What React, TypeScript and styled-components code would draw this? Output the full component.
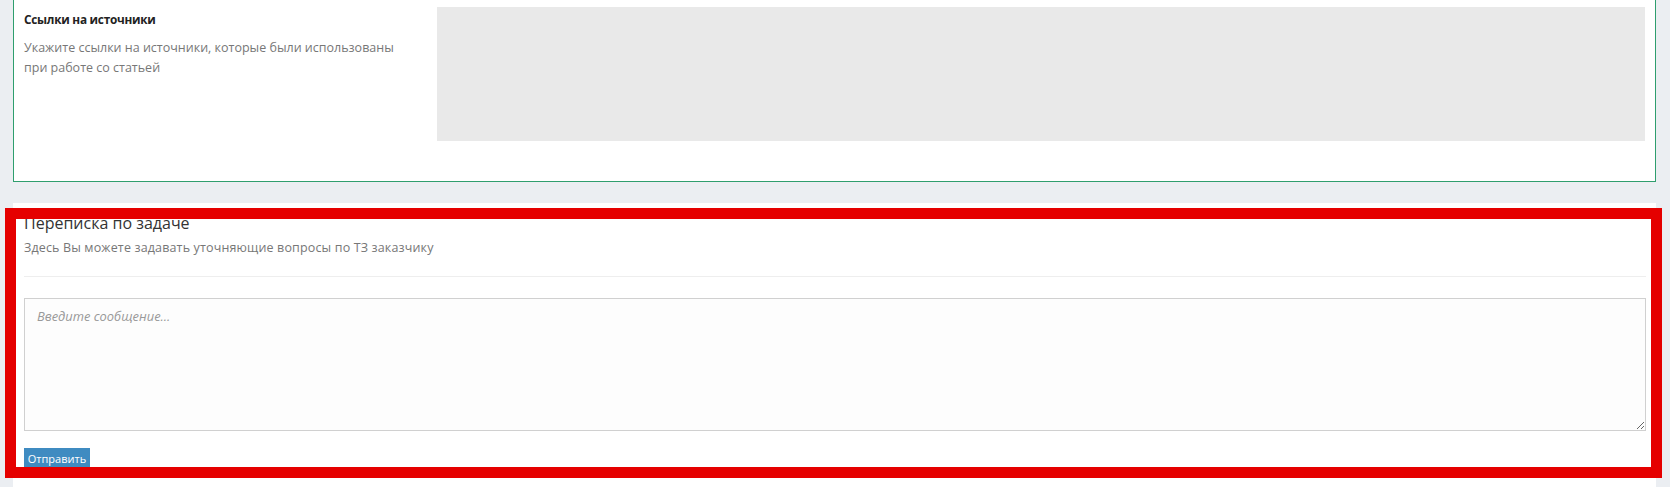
import styled, { createGlobalStyle } from 'styled-components';

const GlobalStyle = createGlobalStyle`
  html, body {
    margin: 0;
    padding: 0;
    background: #ebeef2;
    font-family: "Open Sans", "Liberation Sans", sans-serif;
  }
  * { box-sizing: border-box; }
`;

const Page = styled.div`
  position: relative;
  padding: 0 14px 0 13px;
  height: 487px;
  overflow: hidden;
`;

const SourcesCard = styled.section`
  background: #fff;
  border: 1px solid #2f9e6e;
  border-top: none;
  padding: 7px 10px 40px 0;
  display: flex;
`;

const FieldInfo = styled.div`
  width: 423px;
  padding: 3px 20px 0 10px;
`;

const FieldTitle = styled.div`
  font-size: 11.8px;
  font-weight: 700;
  letter-spacing: -0.25px;
  color: #222;
  line-height: 18px;
`;

const FieldHint = styled.div`
  margin-top: 10px;
  font-size: 12.5px;
  line-height: 20px;
  color: #777;
`;

const SourcesBox = styled.div`
  flex: 1;
  height: 134px;
  background: #e9e9e9;
`;

const ChatCard = styled.section`
  margin-top: 21px;
  background: #fff;
  padding: 10px 10px 40px 11px;
`;

const ChatTitle = styled.h3`
  margin: 0;
  font-size: 16px;
  font-weight: 400;
  line-height: 21px;
  color: #333;
`;

const ChatHint = styled.div`
  margin-top: 5px;
  font-size: 12.5px;
  letter-spacing: 0.15px;
  line-height: 18px;
  color: #777;
`;

const Divider = styled.hr`
  margin: 19px 0 21px;
  border: none;
  border-top: 1px solid #eee;
`;

const MessageInput = styled.textarea`
  display: block;
  width: 100%;
  height: 133px;
  margin: 0;
  padding: 8px 12px;
  border: 1px solid #d0d0d0;
  background: #fdfdfd;
  font-family: "Open Sans", "Liberation Sans", sans-serif;
  font-size: 12.9px;
  color: #333;
  &::placeholder {
    color: #999;
    font-style: italic;
  }
`;

const SendButton = styled.button`
  margin-top: 17px;
  height: 21px;
  width: 66px;
  padding: 0;
  border: none;
  background: #3f8bc1;
  color: #fff;
  font-family: "Open Sans", "Liberation Sans", sans-serif;
  font-size: 11px;
`;

const Highlight = styled.div`
  position: absolute;
  left: 5px;
  top: 208px;
  width: 1657px;
  height: 270px;
  border: 11px solid #e50000;
  pointer-events: none;
`;

export default function App() {
  return (
    <Page>
      <GlobalStyle />
      <SourcesCard>
        <FieldInfo>
          <FieldTitle>Ссылки на источники</FieldTitle>
          <FieldHint>
            Укажите ссылки на источники, которые были использованы при работе со статьей
          </FieldHint>
        </FieldInfo>
        <SourcesBox />
      </SourcesCard>

      <ChatCard>
        <ChatTitle>Переписка по задаче</ChatTitle>
        <ChatHint>Здесь Вы можете задавать уточняющие вопросы по ТЗ заказчику</ChatHint>
        <Divider />
        <MessageInput placeholder="Введите сообщение..." />
        <SendButton>Отправить</SendButton>
      </ChatCard>

      <Highlight />
    </Page>
  );
}
